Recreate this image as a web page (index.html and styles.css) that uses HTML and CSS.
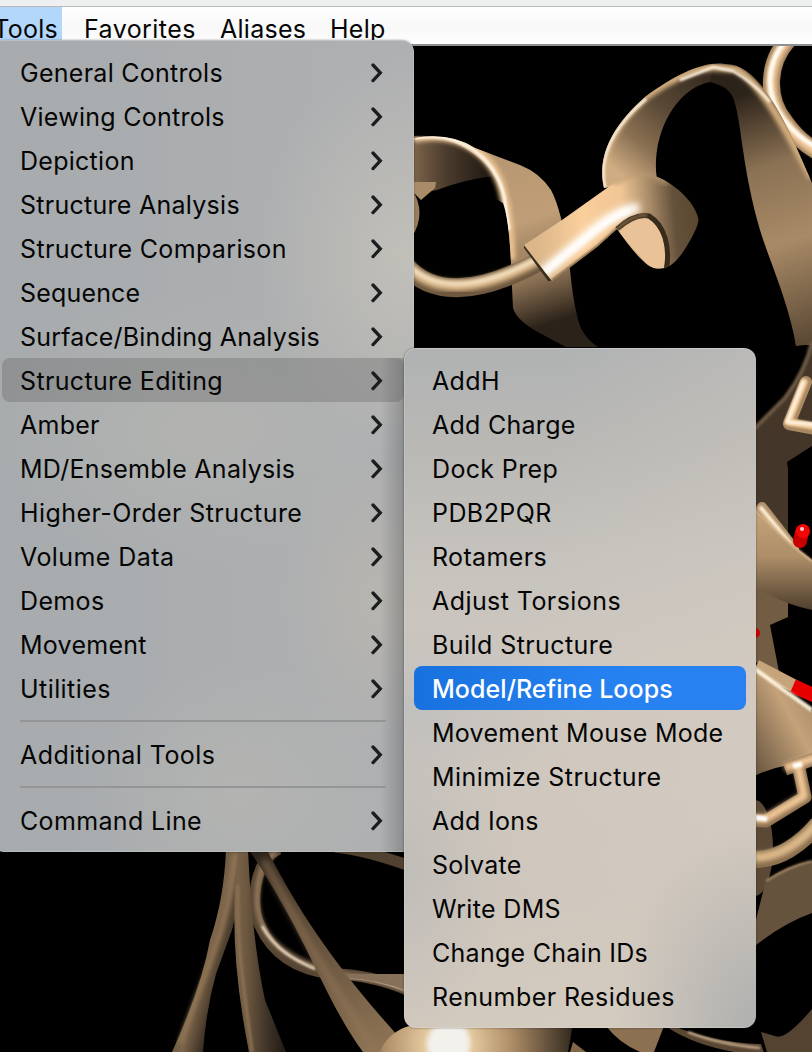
FILE: index.html
```html
<!DOCTYPE html>
<html lang="en">
<head>
<meta charset="utf-8">
<title>Tools menu</title>
<link rel="stylesheet" href="styles.css">
</head>
<body>
<div class="window">
<svg class="scene" viewBox="0 0 812 1052" aria-hidden="true">
  <defs>
    <filter id="b1" x="-20%" y="-20%" width="140%" height="140%"><feGaussianBlur stdDeviation="1"/></filter>
    <filter id="b2" x="-20%" y="-20%" width="140%" height="140%"><feGaussianBlur stdDeviation="2"/></filter>
    <filter id="b3" x="-30%" y="-30%" width="160%" height="160%"><feGaussianBlur stdDeviation="3.5"/></filter>
    <linearGradient id="inner" x1="0" x2="1"><stop offset="0" stop-color="#8f7557"/><stop offset=".5" stop-color="#4a3b2c"/><stop offset="1" stop-color="#1c1611"/></linearGradient>
    <linearGradient id="band" x1="0" y1="0" x2=".25" y2="1"><stop offset="0" stop-color="#b3946f"/><stop offset=".5" stop-color="#bf9e77"/><stop offset=".78" stop-color="#8b7154"/><stop offset="1" stop-color="#2b2219"/></linearGradient>
    <linearGradient id="arch" gradientUnits="userSpaceOnUse" x1="640" y1="190" x2="730" y2="80"><stop offset="0" stop-color="#cfac83"/><stop offset=".25" stop-color="#8b7153"/><stop offset=".55" stop-color="#5a4936"/><stop offset="1" stop-color="#2f251b"/></linearGradient>
    <linearGradient id="limb" gradientUnits="userSpaceOnUse" x1="722" y1="100" x2="800" y2="345"><stop offset="0" stop-color="#2c2319"/><stop offset=".3" stop-color="#8b7254"/><stop offset=".6" stop-color="#a88a66"/><stop offset="1" stop-color="#5b4935"/></linearGradient>
    <linearGradient id="fold" gradientUnits="userSpaceOnUse" x1="535" y1="240" x2="698" y2="225"><stop offset="0" stop-color="#dab689"/><stop offset=".3" stop-color="#fbcf9c"/><stop offset=".55" stop-color="#f0c695"/><stop offset=".72" stop-color="#a88b68"/><stop offset=".86" stop-color="#66523c"/><stop offset="1" stop-color="#59472f"/></linearGradient>
    <linearGradient id="leaf" x1="1" y1="0" x2="0" y2="1"><stop offset="0" stop-color="#9c8060"/><stop offset=".4" stop-color="#c4a27a"/><stop offset="1" stop-color="#5e4c38"/></linearGradient>
    <linearGradient id="leaf2" x1="0" y1="0" x2="0" y2="1"><stop offset="0" stop-color="#c9a77e"/><stop offset=".5" stop-color="#ad8e69"/><stop offset="1" stop-color="#4f3f2e"/></linearGradient>
    <linearGradient id="strandA" gradientUnits="userSpaceOnUse" x1="196" y1="950" x2="232" y2="960"><stop offset="0" stop-color="#6b573f"/><stop offset=".35" stop-color="#7c654a"/><stop offset="1" stop-color="#2b2219"/></linearGradient>
    <linearGradient id="strandB" x1="0" x2="1"><stop offset="0" stop-color="#7b644a"/><stop offset=".25" stop-color="#6b573f"/><stop offset=".6" stop-color="#43362a"/><stop offset="1" stop-color="#211a13"/></linearGradient>
    <linearGradient id="strandC" gradientUnits="userSpaceOnUse" x1="260" y1="850" x2="375" y2="1052"><stop offset="0" stop-color="#2b2219"/><stop offset=".3" stop-color="#594835"/><stop offset="1" stop-color="#8d7355"/></linearGradient>
    <radialGradient id="ball" gradientUnits="userSpaceOnUse" cx="448" cy="1045" r="125"><stop offset="0" stop-color="#f7f2e9"/><stop offset=".14" stop-color="#f2efe8"/><stop offset=".2" stop-color="#e2c79d"/><stop offset=".5" stop-color="#b08f69"/><stop offset="1" stop-color="#33291e"/></radialGradient>
    <clipPath id="foldClip"><path d="M524 245L562 220 607 188Q627 173 642 173C664 175 692 196 698 217Q701 224 683 252Q671 270 658 269C645 268 630 247 617 229L597 247 552 281Z"/></clipPath>
    <clipPath id="bandClip"><path d="M414 138Q450 132 475 148L520 165Q548 176 555 198C566 225 567 270 577 315Q580 335 598 347H566C545 335 515 325 513 308C511 270 511 225 503 203Q480 190 414 196Z"/></clipPath>
    <clipPath id="archClip"><path d="M604 188C597 157 611 127 645 97C675 75 703 61 725 64C751 63 772 96 790 133L812 183V344L796 346C789 303 769 260 760 230C742 168 742 125 734 100Q727 82 710 82C677 88 651 133 657 178Z"/></clipPath>
  </defs>
  <rect width="812" height="1052" fill="#000"/>

  <!-- left helix -->
  <path d="M400 137Q450 131 480 155Q492 166 494 176Q466 179 437 190L400 197Z" fill="url(#inner)"/>
  <path d="M400 182H436L435 188 421 200 414 193Z" fill="#a98b68"/>
  <path d="M412 190Q427 212 412 237Z" fill="#9a7e5d"/>
  <path d="M440 137Q460 139 475 148L520 165Q540 173 551 190Q556 199 561 218L570 270Q573 300 577 315Q580 335 598 347H566C545 335 518 325 513 308C511 270 511 235 505 205Q497 156 440 137Z" fill="url(#band)"/>
  <g clip-path="url(#bandClip)"><path d="M414 138C465 129 496 158 504 196Q510 220 511 260" fill="none" stroke="#e9c18f" stroke-width="9" filter="url(#b2)"/><path d="M414 138C464 130 496 161 504 196L509 230" fill="none" stroke="#fffdf3" stroke-width="3" filter="url(#b1)"/></g>
  <g fill="none"><path d="M405 265C430 295 475 297 540 261" stroke="#6e583f" stroke-width="19"/><path d="M405 263C430 293 475 295 540 259" stroke="#d2ad80" stroke-width="11" filter="url(#b2)"/><path d="M405 261C430 291 475 293 540 257" stroke="#fff1d4" stroke-width="4" filter="url(#b2)"/></g>

  <!-- coil at the top right -->
  <g fill="none"><path d="M788 40C768 62 765 98 785 122Q799 142 820 153" stroke="#9b7d59" stroke-width="17"/><path d="M788 40C768 62 765 98 785 122Q799 142 820 153" stroke="#efc697" stroke-width="11" filter="url(#b2)"/><path d="M786 40C766 64 764 94 784 120Q799 139 820 149" stroke="#fffaf0" stroke-width="5" filter="url(#b1)"/></g>

  <!-- arch -->
  <path d="M604 188C597 157 611 127 645 97C675 75 703 61 725 64L737 100Q727 82 710 82C677 88 651 133 657 178Z" fill="url(#arch)"/>
  <path d="M713 64C751 63 772 96 790 133L812 183V344L796 346C789 303 769 260 760 230C742 168 742 125 734 100Q729 86 710 82Z" fill="url(#limb)"/>
  <g clip-path="url(#archClip)" fill="none"><path d="M605 190C598 157 611 127 645 97C677 74 703 67 714 67L737 69C758 82 776 110 812 178" stroke="#d3ad7e" stroke-width="8" filter="url(#b2)"/><path d="M605 188C598 157 612 128 646 99M680 80L713 67 733 71Q753 82 770 102" stroke="#fff7e8" stroke-width="2.5" filter="url(#b1)"/></g>

  <!-- folded ribbon end -->
  <path d="M524 245L552 281 548 281 524 248Z" fill="#3a2e21"/>
  <path d="M524 245L562 220 607 188Q627 173 642 173C664 175 692 196 698 217Q701 224 683 252Q671 270 658 269C645 268 630 247 617 229L597 247 552 281Z" fill="url(#fold)"/>
  <g clip-path="url(#foldClip)">
    <path d="M612 182Q640 160 668 182" fill="none" stroke="#b89770" stroke-width="8" filter="url(#b3)"/>
    <path d="M540 275Q570 250 595 229Q620 209 639 208" fill="none" stroke="#fffdf8" stroke-width="10" filter="url(#b3)"/>
    <path d="M545 272L593 233Q616 214 630 211" fill="none" stroke="#fff" stroke-width="5" filter="url(#b2)"/>
    <path d="M617 229Q635 215 648 217C661 225 668 245 664 268H650Z" fill="#e9c397"/>
    <path d="M617 229Q635 213 649 216C664 225 671 246 666 272" fill="none" stroke="#392b1c" stroke-width="5"/>
    <path d="M552 281L597 247 617 229Q632 215 647 215" fill="none" stroke="#765d40" stroke-width="3" filter="url(#b1)"/>
  </g>

  <!-- right edge ribbons and sticks -->
  <path d="M795 340H812V345H796Z" fill="#5b4935"/>
  <path d="M812 342Q806 370 785 398L750 433V629L788 617V469L787 462 812 446Z" fill="#44372a"/>
  <path d="M812 342Q806 370 785 398L750 433" fill="none" stroke="#6d5942" stroke-width="4" filter="url(#b1)"/>
  <path d="M750 585H788V617L770 625 779 672 750 660Z" fill="#725c43"/>
  <g fill="none" stroke-linecap="round" stroke-linejoin="round"><path d="M806 382L789 424 820 430" stroke="#a98861" stroke-width="12"/><path d="M804 382L788 422 820 427" stroke="#f6d0a1" stroke-width="7" filter="url(#b1)"/><path d="M803 382L787 422 820 425" stroke="#fff9ee" stroke-width="2.5" filter="url(#b1)"/><path d="M762 507L794 548" stroke="#b3926b" stroke-width="10"/><path d="M761 508L790 543" stroke="#fff0d8" stroke-width="4" filter="url(#b1)"/></g>
  <path d="M750 503Q780 537 812 560V610Q779 603 750 584Z" fill="url(#leaf2)"/>
  <path d="M754 506Q780 537 812 561" fill="none" stroke="#e5c195" stroke-width="2" filter="url(#b1)"/>
  <path d="M802 532L800 541" stroke="#c80000" stroke-width="14" stroke-linecap="round"/>
  <circle cx="803" cy="531" r="7" fill="#f20606"/><circle cx="802" cy="529" r="2" fill="#ffd0d0"/>
  <circle cx="755" cy="633" r="5" fill="#c90000"/>
  <path d="M756 666L800 689" stroke="#c6a47b" stroke-width="13"/>
  <path d="M793 686L820 698" stroke="#e60000" stroke-width="14"/>
  <path d="M750 665L812 711V763Q779 763 750 778Z" fill="url(#leaf)"/>
  <path d="M752 667L812 710" stroke="#fff4df" stroke-width="4" filter="url(#b1)"/>
  <ellipse cx="755" cy="848" rx="18" ry="48" fill="#5b4936"/>
  <g fill="none" stroke-linejoin="round"><path d="M785 769L820 757M798 764L805 797 766 821 750 820" stroke="#8d7050" stroke-width="13"/><path d="M785 768L820 756M798 766L804 796 765 819 750 818" stroke="#efc696" stroke-width="8" filter="url(#b2)"/><path d="M750 817L767 819M793 766L802 764" stroke="#fff" stroke-width="5" filter="url(#b1)"/><path d="M750 859C779 862 803 842 818 824" stroke="#8b704f" stroke-width="17"/><path d="M750 857C779 860 803 840 818 822" stroke="#dab789" stroke-width="9" filter="url(#b2)"/></g>
  <path d="M750 943L766 880Q789 865 812 861V913Q781 924 750 950Z" fill="#66533d"/>
  <path d="M766 881Q789 866 812 861" fill="none" stroke="#a88a69" stroke-width="2" filter="url(#b1)"/>
  <path d="M761 1032L775 1036Q785 1041 812 1009V1052H767Z" fill="#544331"/>

  <!-- strands along the bottom -->
  <g fill="none"><path d="M279 849C253 861 250 908 260 926C273 955 298 970 332 974Q370 974 410 991" stroke="#574633" stroke-width="11"/><path d="M276 852C255 865 253 906 263 926C275 951 305 966 350 976Q378 977 410 991" stroke="#a48767" stroke-width="4" filter="url(#b2)"/><path d="M262 926C275 949 292 959 315 969M345 977Q370 976 410 991" stroke="#fff0dc" stroke-width="2" filter="url(#b1)"/><path d="M335 847Q365 850 410 866" stroke="#514130" stroke-width="11"/></g>
  <path d="M345 974H410V992Q378 979 345 978Z" fill="#86705a"/>
  <path d="M226 850H243Q240 900 232 930L216 974Q206 1010 203 1052H172Q201 989 210 940Q224 899 226 850Z" fill="url(#strandA)"/>
  <path d="M235 855C230 925 207 965 180 1043" fill="none" stroke="#96795a" stroke-width="4" filter="url(#b2)"/>
  <path d="M240 850H248Q252 940 265 1000L286 1052H249Q231 962 235 890Z" fill="url(#strandB)"/>
  <path d="M238 885C236 950 246 1000 252 1052" fill="none" stroke="#8b7052" stroke-width="3" filter="url(#b1)"/>
  <path d="M249 850H267C292 898 325 955 398 1036L405 1052H363C325 1001 307 935 249 850Z" fill="url(#strandC)"/>
  <path d="M264 860C300 930 325 975 376 1052" fill="none" stroke="#947759" stroke-width="4" filter="url(#b3)"/>
  <path d="M380 1052Q390 1025 430 1022H573Q571 1036 568 1052Z" fill="url(#ball)"/>
  <ellipse cx="450" cy="1043" rx="18" ry="28" fill="#f3f1ec" filter="url(#b3)"/>
  <path d="M573 1042L586 1052H570Z" fill="#806749"/>
  <path d="M606 1026H664L654 1052H640Q619 1043 606 1026Z" fill="#8b7052"/>
  <path d="M664 1022Q710 1043 761 1044L765 1056Q705 1051 670 1029Z" fill="#594733"/>
  <path d="M688 1032Q718 1044 760 1048" fill="none" stroke="#d7b996" stroke-width="2" filter="url(#b1)"/>
</svg>

<header class="titlebar"></header>
<nav class="menubar">
  <span class="title title-open">Tools</span>
  <span class="title t1">Favorites</span>
  <span class="title t2">Aliases</span>
  <span class="title t3">Help</span>
</nav>

<svg class="defs" aria-hidden="true"><symbol id="chevron" viewBox="0 0 12 20"><path d="M2 2L9.3 9.8 2 17.6" fill="none" stroke="#1c1d1e" stroke-width="3.3" stroke-linecap="round" stroke-linejoin="miter"/></symbol></svg>

<ul class="menu tools-menu">
  <li class="item">General Controls<svg class="chev"><use href="#chevron"/></svg></li>
  <li class="item">Viewing Controls<svg class="chev"><use href="#chevron"/></svg></li>
  <li class="item">Depiction<svg class="chev"><use href="#chevron"/></svg></li>
  <li class="item">Structure Analysis<svg class="chev"><use href="#chevron"/></svg></li>
  <li class="item roomy">Structure Comparison<svg class="chev"><use href="#chevron"/></svg></li>
  <li class="item snug">Sequence<svg class="chev"><use href="#chevron"/></svg></li>
  <li class="item snug">Surface/Binding Analysis<svg class="chev"><use href="#chevron"/></svg></li>
  <li class="item item-open roomy">Structure Editing<svg class="chev"><use href="#chevron"/></svg></li>
  <li class="item">Amber<svg class="chev"><use href="#chevron"/></svg></li>
  <li class="item">MD/Ensemble Analysis<svg class="chev"><use href="#chevron"/></svg></li>
  <li class="item wide">Higher-Order Structure<svg class="chev"><use href="#chevron"/></svg></li>
  <li class="item wide">Volume Data<svg class="chev"><use href="#chevron"/></svg></li>
  <li class="item roomy">Demos<svg class="chev"><use href="#chevron"/></svg></li>
  <li class="item">Movement<svg class="chev"><use href="#chevron"/></svg></li>
  <li class="item wide">Utilities<svg class="chev"><use href="#chevron"/></svg></li>
  <li class="separator"></li>
  <li class="item wide">Additional Tools<svg class="chev"><use href="#chevron"/></svg></li>
  <li class="separator"></li>
  <li class="item roomy">Command Line<svg class="chev"><use href="#chevron"/></svg></li>
</ul>

<ul class="menu submenu">
  <li class="item roomy">AddH</li>
  <li class="item">Add Charge</li>
  <li class="item roomy">Dock Prep</li>
  <li class="item wide">PDB2PQR</li>
  <li class="item roomy">Rotamers</li>
  <li class="item wide">Adjust Torsions</li>
  <li class="item wide">Build Structure</li>
  <li class="item item-selected">Model/Refine Loops</li>
  <li class="item">Movement Mouse Mode</li>
  <li class="item wide">Minimize Structure</li>
  <li class="item">Add Ions</li>
  <li class="item">Solvate</li>
  <li class="item roomy">Write DMS</li>
  <li class="item">Change Chain IDs</li>
  <li class="item wide">Renumber Residues</li>
</ul>
</div>
</body>
</html>
```
FILE: styles.css
```css
* { box-sizing: border-box; }
body { margin: 0; background: #000; }
.window {
  position: relative;
  width: 812px;
  height: 1052px;
  overflow: hidden;
  font-family: Inter, "Liberation Sans", sans-serif;
  font-size: 25px;
  letter-spacing: .27px;
  color: #050505;
}
.scene { position: absolute; inset: 0; width: 812px; height: 1052px; }
.defs { position: absolute; width: 0; height: 0; }
.titlebar {
  position: relative;
  height: 7px;
  background: #eeeff0;
  border-bottom: 1px solid #b9b9b6;
}
.menubar {
  position: relative;
  display: flex;
  height: 39px;
  background: linear-gradient(#fff, #f8f8f8 60%, #fff);
  border-bottom: 2px solid #8d9192;
  line-height: 44px;
  white-space: nowrap;
}
.title-open {
  display: flex;
  justify-content: flex-end;
  width: 62px;
  padding-right: 4px;
  background: #b3d7fa;
}
.t1 { margin-left: 22px; width: 136px; letter-spacing: .43px; }
.t2 { width: 110px; }

.menu { position: absolute; margin: 0; padding: 10px; list-style: none; border-radius: 12px; }
.tools-menu {
  left: -8px;
  top: 40px;
  width: 422px;
  height: 812px;
  background:
    linear-gradient(90deg, transparent 388px, rgba(60, 62, 65, .3) 412px, transparent 412px) 0 318px / 100% 494px no-repeat,
    radial-gradient(ellipse 150px 200px at 415px 215px, #c1bfb8, transparent),
    radial-gradient(ellipse 100px 150px at 385px 560px, rgba(187, 183, 174, .7), transparent),
    radial-gradient(ellipse 200px 140px at 205px 390px, rgba(180, 181, 177, .8), transparent),
    radial-gradient(ellipse 150px 130px at 250px 750px, rgba(181, 182, 178, .8), transparent),
    linear-gradient(90deg, #a7abad, #afb0b2);
  box-shadow: inset 0 1px 0 rgba(215, 215, 215, .45), inset 0 -1px 0 rgba(215, 215, 215, .35), inset -1px 0 0 rgba(215, 215, 215, .2), 0 0 2px rgba(0, 0, 0, .4);
}
.submenu {
  left: 404px;
  top: 348px;
  width: 352px;
  height: 680px;
  background:
    radial-gradient(ellipse 170px 90px at 0 360px, rgba(190, 190, 190, .8), transparent),
    radial-gradient(ellipse 140px 200px at 352px 680px, #b2b2b0 10%, transparent),
    radial-gradient(ellipse 100px 180px at 0 520px, rgba(188, 187, 184, .8), transparent),
    linear-gradient(100deg, transparent 35%, rgba(217, 207, 195, .4)),
    linear-gradient(#b0b2b3, #b9b8b5 14%, #c5c2bd 30%, #cfc8bf 50%, #cec6bc 80%, #d3cabe);
  box-shadow: 0 0 2px rgba(30, 30, 30, .6), inset 0 1px 0 rgba(225, 225, 225, .45), inset 0 -1px 0 rgba(225, 225, 225, .3), inset 1px 0 0 rgba(225, 225, 225, .25);
}
.item {
  display: flex;
  align-items: center;
  justify-content: space-between;
  height: 44px;
  padding: 2px 18px 0;
  border-radius: 8px;
  white-space: nowrap;
}
.snug { letter-spacing: .17px; }
.roomy { letter-spacing: .35px; }
.wide { letter-spacing: .43px; }
.item-open { background: rgba(90, 90, 90, .3); }
.item-selected { color: #fff; font-weight: 500; letter-spacing: .06px; background: linear-gradient(90deg, #1772df, #2681f0 55%, #2981f1); }
.chev { width: 12px; height: 20px; margin-right: 3px; }
.separator { height: 22px; margin: 0 18px; padding-top: 10px; }
.separator::before { content: ""; display: block; height: 2px; background: #939596; }
```
